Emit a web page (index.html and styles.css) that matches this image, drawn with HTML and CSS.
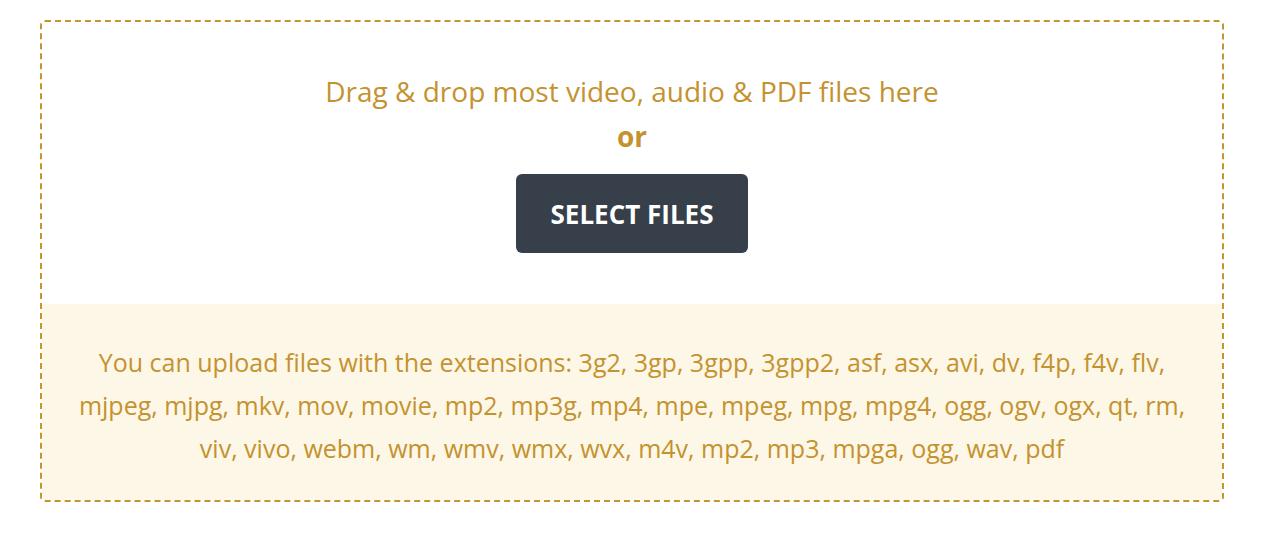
FILE: index.html
```html
<!DOCTYPE html>
<html lang="en">
<head>
    <meta charset="UTF-8">
    <meta name="viewport" content="width=device-width, initial-scale=1.0">
    <title>Upload files</title>
    <link rel="stylesheet" href="styles.css">
</head>
<body>

    <div class="dropzone">
        <!-- Drop area -->
        <div class="drop-area">
            <p class="drop-text">Drag &amp; drop most video, audio &amp; PDF files here</p>
            <p class="drop-or">or</p>
            <button type="button" class="select-btn">SELECT FILES</button>
        </div>

        <!-- Allowed extensions -->
        <div class="extensions">
            <p>You can upload files with the extensions: 3g2, 3gp, 3gpp, 3gpp2, asf, asx, avi, dv, f4p, f4v, flv, mjpeg, mjpg, mkv, mov, movie, mp2, mp3g, mp4, mpe, mpeg, mpg, mpg4, ogg, ogv, ogx, qt, rm, viv, vivo, webm, wm, wmv, wmx, wvx, m4v, mp2, mp3, mpga, ogg, wav, pdf</p>
        </div>
    </div>

</body>
</html>
```

FILE: styles.css
```css
body {
    margin: 0;
    font-family: "Open Sans", sans-serif;
    background: #ffffff;
}
.dropzone {
    margin: 20px 40px 0;
    border: 2px dashed #c4962f;
    border-radius: 5px;
    overflow: hidden;
}
.drop-area {
    height: 282px;
    display: flex;
    flex-direction: column;
    align-items: center;
    padding-top: 49px;
    box-sizing: border-box;
    color: #c4922f;
}
.drop-text {
    margin: 0;
    font-size: 28px;
    line-height: 40px;
}
.drop-or {
    margin: 5px 0 0;
    font-size: 28px;
    font-weight: bold;
    line-height: 40px;
}
.select-btn {
    margin-top: 18px;
    width: 232px;
    height: 79px;
    background-color: #373f4b;
    color: white;
    border: none;
    border-radius: 6px;
    font-family: inherit;
    font-size: 26px;
    font-weight: bold;
    cursor: pointer;
}
.extensions {
    background-color: #fdf7e7;
    color: #c4922f;
    text-align: center;
    padding: 37px 24px 30px;
}
.extensions p {
    margin: 0;
    font-size: 25px;
    line-height: 43px;
}
```
